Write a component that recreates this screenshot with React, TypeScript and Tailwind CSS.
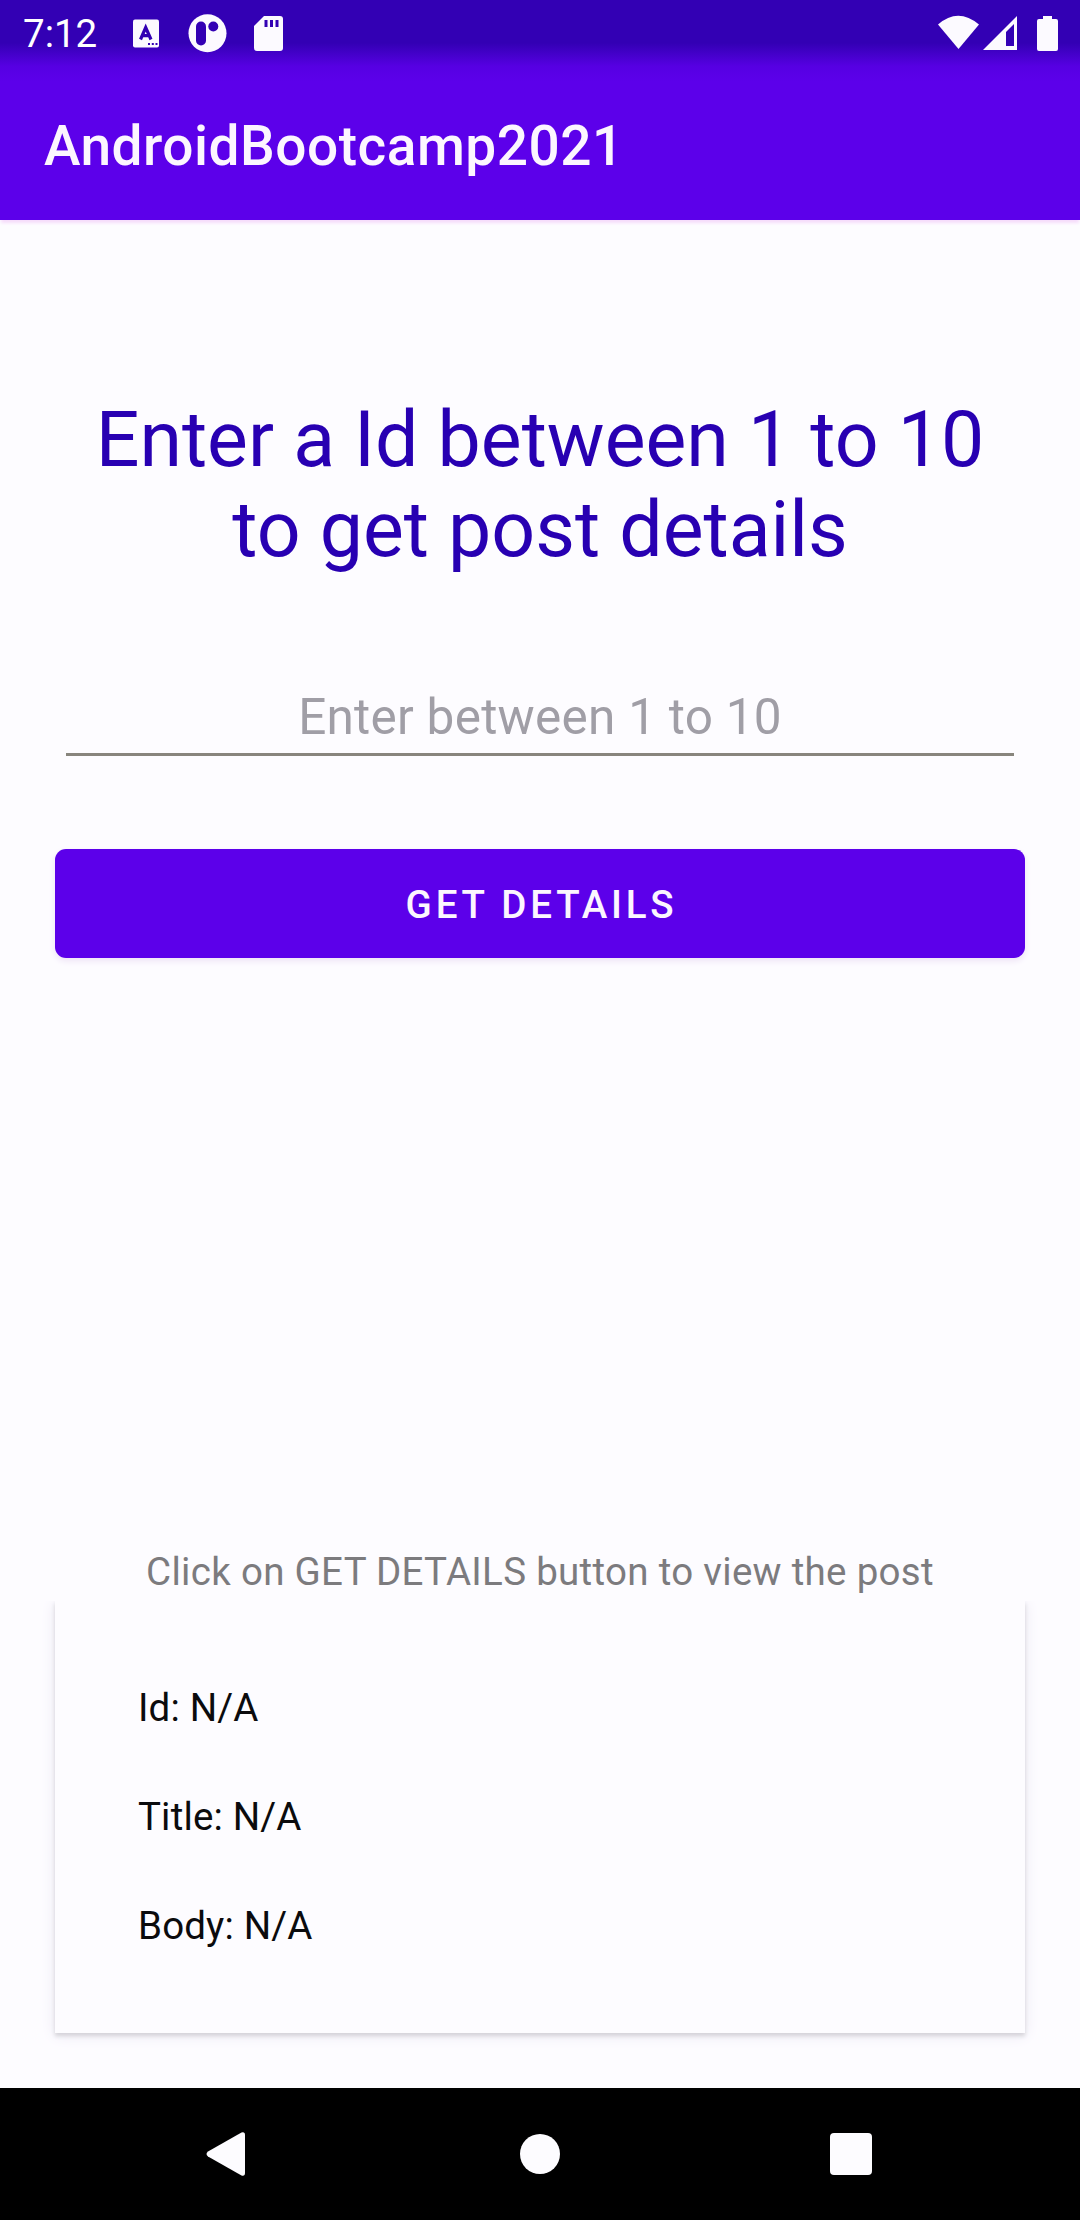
import type { ReactNode } from "react";

function StatusBar() {
  return (
    <div className="flex h-[66px] items-center bg-linear-to-b from-[#3300b4] from-65% to-[#5600e2] pl-[23px] text-white">
      <span className="w-[110px] text-[38.5px] leading-[66px]"><span className="relative top-px">7:12</span></span>
      <svg className="h-[66px] w-[160px]" viewBox="133 0 160 66" fill="#fcfaff">
        <rect x="133" y="19.500" width="26" height="28" rx="2" />
        <path d="M140.500 39.500 145.700 27.500 151 39.500M142.500 35.700h6.500" fill="none" stroke="#3300b4" strokeWidth="3.200" />
        <path d="M148 43h2v2h-2zM151.800 43h2v2h-2zM155.500 43h2v2h-2z" fill="#3300b4" />
        <circle cx="207.500" cy="33.300" r="19" />
        <rect x="196" y="21.500" width="10" height="24" rx="5" fill="#3300b4" />
        <circle cx="213.300" cy="26.500" r="5" fill="#3300b4" />
        <path d="M264 16h16a3 3 0 0 1 3 3v29a3 3 0 0 1-3 3h-23a3 3 0 0 1-3-3V26z" />
        <path d="M264.500 20h3v7h-3zM270 20h3v7h-3zM275.500 20h3v7h-3z" fill="#3300b4" />
      </svg>
      <svg className="ml-auto h-[66px] w-[144px]" viewBox="936 0 144 66" fill="#fcfaff">
        <path d="M938 24.500Q958 7 979 24.500L958.500 49z" />
        <path d="M1017 16v34h-34zM1014 24l-8 8v14h8z" fillRule="evenodd" />
        <path d="M1043 16h9v3h4a2 2 0 0 1 2 2v28a2 2 0 0 1-2 2h-17a2 2 0 0 1-2-2V21a2 2 0 0 1 2-2h4z" />
      </svg>
    </div>
  );
}

function Field({ children }: { children: ReactNode }) {
  return <p className="h-[109px] text-[38.5px] leading-[46px] tracking-[0.15px] text-[#0b0b0d]">{children}</p>;
}

function NavBar() {
  return (
    <nav className="flex h-[132px] items-center bg-black">
      <svg className="ml-[200px] size-[52px]" viewBox="200 2128 52 52" fill="#fdfcff">
        <path d="M208 2151.500 241.500 2132.500Q245 2131.500 245 2135V2173Q245 2176.500 241.500 2175.500L208 2156.500Q205 2154 208 2151.500z" />
      </svg>
      <div className="ml-[268px] size-10 rounded-full bg-[#fdfcff]" />
      <div className="ml-[270px] size-[42px] rounded-[4px] bg-[#fdfcff]" />
    </nav>
  );
}

export default function App() {
  return (
    <div className="flex h-[2220px] w-[1080px] flex-col overflow-hidden bg-[#fdfcff] font-[Roboto,sans-serif]">
      <StatusBar />
      <header className="h-[154px] bg-linear-to-b from-[#5600e2] to-[#5c00ea] to-10% pt-[48px] pl-[44px] shadow-[0_4px_3px_-1px_#f6dcfb]">
        <h1 className="text-[55px] leading-[64px] font-medium tracking-[0.5px] text-[#fcf6ff]">AndroidBootcamp2021</h1>
      </header>
      <main className="flex flex-1 flex-col px-[55px]">
        <h2 className="mt-[175px] text-center text-[77px] leading-[90px] text-[#2800b2]">
          Enter a Id between 1 to 10
          <br />
          to get post details
        </h2>
        <div className="mx-[11px] mt-[113px] h-[68px] border-b-3 border-[#88857d] text-center text-[49.5px] leading-[58px] tracking-[0.25px] text-[#a09ea6]">
          Enter between 1 to 10
        </div>
        <button className="mt-[93px] h-[109px] shrink-0 rounded-[11px] bg-[#5c00ea] pt-[3px] pl-[3px] text-[38.5px] font-medium tracking-[3.8px] text-[#fcf6ff] shadow-[0_3px_6px_#eee3f6]">
          GET DETAILS
        </button>
        <p className="mt-[591px] h-[52px] text-center text-[38.5px] leading-[46px] tracking-[0.3px] text-[#7c7b7e]">
          Click on GET DETAILS button to view the post
        </p>
        <section className="h-[432px] shrink-0 bg-[#fdfcff] pt-[84px] pl-[83px] shadow-[0_3px_4px_#d5d3d9,0_2px_14px_#ebe8f2] [clip-path:inset(0_-16px_-20px_-16px)]">
          <Field>Id: N/A</Field>
          <Field>Title: N/A</Field>
          <Field>Body: N/A</Field>
        </section>
      </main>
      <NavBar />
    </div>
  );
}
